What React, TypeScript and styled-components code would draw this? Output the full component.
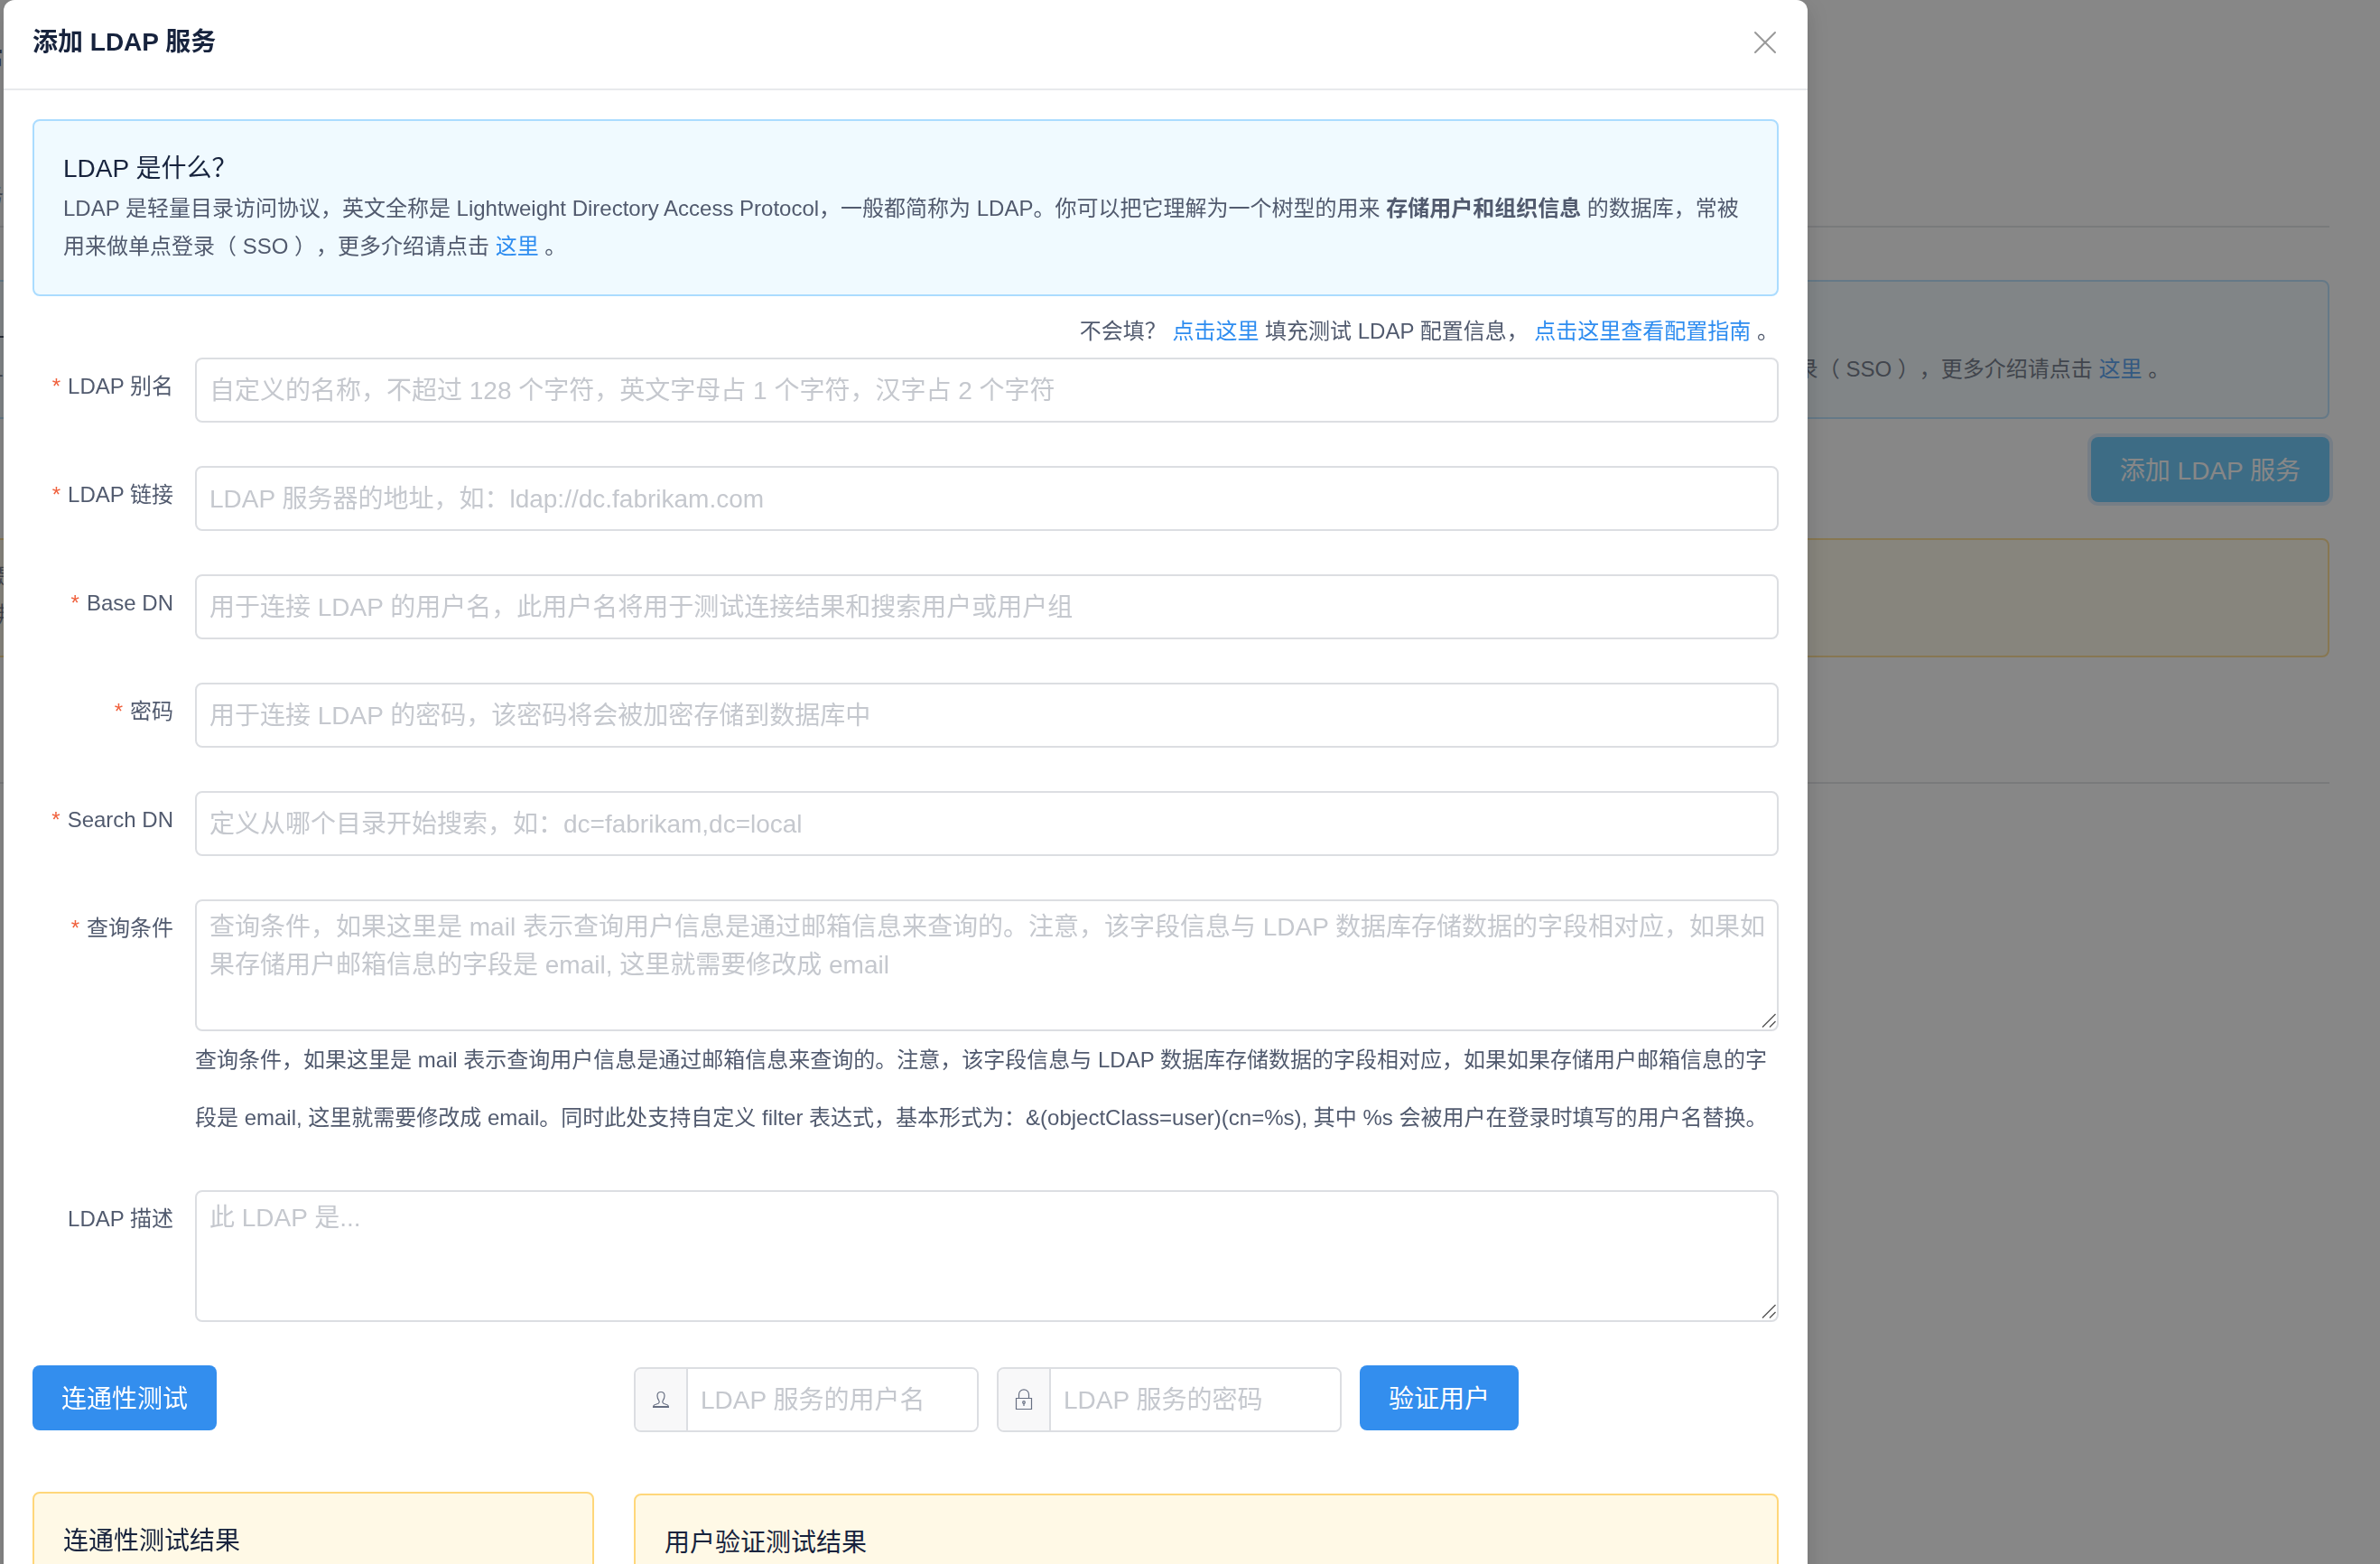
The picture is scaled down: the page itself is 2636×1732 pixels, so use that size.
import React from 'react';
import styled, { createGlobalStyle } from 'styled-components';

const GlobalStyle = createGlobalStyle`
  *, *::before, *::after { box-sizing: border-box; }
  html, body { margin: 0; overflow: hidden; }
  body, button, input, textarea {
    font-family: "Liberation Sans", "Noto Sans CJK SC", sans-serif;
  }
  body {
    background: #fff;
    color: #515a6e;
    font-size: 24px;
    line-height: 42px;
    text-spacing-trim: space-all;
  }
  h1, h2, h3, p { margin: 0; font-weight: 400; }
`;

const Link = styled.a`
  color: #2d8cf0;
  text-decoration: none;
`;

const tones = {
  info: { background: '#f0faff', border: '#abdcff' },
  warning: { background: '#fff9e6', border: '#ffd77a' },
};

const Alert = styled.section<{ $tone: keyof typeof tones; $compact?: boolean }>`
  padding: ${(p) => (p.$compact ? '20px 32px 24px' : '32px')};
  border: 2px solid ${(p) => tones[p.$tone].border};
  border-radius: 8px;
  background: ${(p) => tones[p.$tone].background};
`;

const AlertTitle = styled.h3`
  margin-bottom: 2px;
  color: #17233d;
  font-size: 28px;
  line-height: 42px;
`;

const Button = styled.button<{ $focused?: boolean }>`
  height: 72px;
  padding: 0 32px 2px;
  border: 0;
  border-radius: 8px;
  background: ${(p) => (p.$focused ? '#48bbfa' : '#338eee')};
  box-shadow: ${(p) => (p.$focused ? '0 0 0 4px rgba(45, 140, 240, 0.2)' : 'none')};
  color: #fff;
  font-size: 28px;
  white-space: nowrap;
`;

/* Settings page behind the dialog */

const Page = styled.main`
  margin: 0 56px 0 -44px;
`;

const PageHeader = styled.header`
  padding: 40px 0 12px;
  border-bottom: 2px solid #dcdee2;
`;

const PageTitle = styled.h1`
  color: #17233d;
  font-size: 48px;
  font-weight: 700;
  line-height: 72px;
  margin-bottom: 84px;
`;

const PageBody = styled.div`
  padding: 58px 0 138px;
  border-bottom: 2px solid #dcdee2;
`;

const PageActions = styled.div`
  display: flex;
  justify-content: flex-end;
  padding: 20px 0 40px;
`;

/* Dialog */

const Mask = styled.div`
  position: fixed;
  inset: 0;
  overflow: hidden;
  padding: 0 634px 0 4px;
  background: rgba(55, 55, 55, 0.6);
`;

const Dialog = styled.div`
  border-radius: 12px;
  background: #fff;
  box-shadow: 0 8px 24px rgba(0, 0, 0, 0.15);
`;

const DialogHeader = styled.header`
  display: flex;
  align-items: center;
  justify-content: space-between;
  height: 100px;
  padding: 0 32px 4px;
  border-bottom: 2px solid #e8eaec;
`;

const DialogTitle = styled.h2`
  color: #17233d;
  font-size: 28px;
  font-weight: 700;
  line-height: 40px;
`;

const CloseButton = styled.button`
  display: flex;
  padding: 0;
  border: 0;
  background: none;
  color: #999;
`;

const DialogBody = styled.form`
  padding: 32px;
`;

const HelpLine = styled.p`
  margin: 18px 0 8px;
  text-align: right;
`;

const FormItem = styled.div`
  display: grid;
  grid-template-columns: 156px 1fr;
  column-gap: 24px;
  margin-bottom: 48px;
`;

const Label = styled.label<{ $required?: boolean }>`
  padding-top: 20px;
  line-height: 24px;
  text-align: right;

  &::before {
    content: ${(p) => (p.$required ? '"*"' : 'none')};
    margin-right: 8px;
    color: #f0603c;
  }
`;

const Input = styled.input`
  width: 100%;
  height: 72px;
  padding: 2px 14px 0;
  border: 2px solid #dcdee2;
  border-radius: 8px;
  background: #fff;
  color: #515a6e;
  font-size: 28px;
  outline: none;

  &::placeholder { color: #c5c8ce; }
`;

const AreaBox = styled.div`
  position: relative;
`;

const Area = styled.textarea`
  display: block;
  width: 100%;
  padding: 8px 10px 8px 14px;
  border: 2px solid #dcdee2;
  border-radius: 8px;
  color: #515a6e;
  font-size: 28px;
  line-height: 42px;
  resize: none;
  outline: none;

  &::placeholder { color: #c5c8ce; }
`;

const Grip = styled.svg`
  position: absolute;
  right: 3px;
  bottom: 4px;
  pointer-events: none;
`;

const Hint = styled.p`
  line-height: 64px;
`;

const Tests = styled.div`
  display: grid;
  grid-template-columns: 622fr 1268fr;
  column-gap: 44px;
  align-items: start;
`;

const TestColumn = styled.div`
  display: grid;
  row-gap: 68px;
`;

const TestRow = styled.div`
  display: flex;
  align-items: flex-start;
  gap: 20px;
`;

const InputGroup = styled.div`
  display: flex;
  width: 382px;
  height: 72px;
  margin-top: 2px;
  overflow: hidden;
  border: 2px solid #dcdee2;
  border-radius: 8px;
`;

const Prepend = styled.label`
  display: flex;
  flex: 0 0 58px;
  align-items: center;
  justify-content: center;
  border-right: 2px solid #dcdee2;
  background: #f8f8f9;
`;

const GroupInput = styled(Input)`
  flex: 1;
  min-width: 0;
  height: 68px;
  border: 0;
  border-radius: 0;
`;

const ResultAlert = styled(Alert)`
  min-height: 160px;
`;

const CloseIcon = () => (
  <svg width="30" height="30" viewBox="0 0 30 30" fill="none" stroke="currentColor" strokeWidth="2" strokeLinecap="round">
    <path d="M4 4 26 26M26 4 4 26" />
  </svg>
);

const PersonIcon = () => (
  <svg width="28" height="28" viewBox="0 0 28 28" fill="none" stroke="#676f82" strokeWidth="1.2" strokeLinejoin="round">
    <path d="M14 5.5c-2.6 0-4 1.8-4 4.3 0 2.2.8 3.8 1.8 5.2.5.8.4 2.2-.2 2.9-.8.9-4.2 1.3-5.2 2.3-.7.7-.9 1.5-.9 2.3h17c0-.8-.2-1.6-.9-2.3-1-1-4.4-1.4-5.2-2.3-.6-.7-.7-2.1-.2-2.9 1-1.4 1.8-3 1.8-5.2 0-2.5-1.4-4.3-4-4.3z" />
    <path d="M5.8 21.5h16.4" />
  </svg>
);

const LockIcon = () => (
  <svg width="28" height="28" viewBox="0 0 28 28" fill="none" stroke="#676f82" strokeWidth="1.2">
    <path d="M5.5 12.5h17v12h-17zM8.5 12.5V8.3a5.5 5.5 0 0 1 11 0v4.2" />
    <circle cx="14" cy="17" r="1.3" />
    <path d="M14 18.3v2.7" />
  </svg>
);

const fields = [
  { id: 'alias', label: 'LDAP 别名', placeholder: '自定义的名称，不超过 128 个字符，英文字母占 1 个字符，汉字占 2 个字符' },
  { id: 'url', label: 'LDAP 链接', placeholder: 'LDAP 服务器的地址，如：ldap://dc.fabrikam.com' },
  { id: 'base-dn', label: 'Base DN', placeholder: '用于连接 LDAP 的用户名，此用户名将用于测试连接结果和搜索用户或用户组' },
  { id: 'password', label: '密码', type: 'password', placeholder: '用于连接 LDAP 的密码，该密码将会被加密存储到数据库中' },
  { id: 'search-dn', label: 'Search DN', placeholder: '定义从哪个目录开始搜索，如：dc=fabrikam,dc=local' },
];

const LdapIntro = () => (
  <Alert $tone="info">
    <AlertTitle>LDAP 是什么？</AlertTitle>
    <p>
      LDAP 是轻量目录访问协议，英文全称是 Lightweight Directory Access Protocol，一般都简称为
      LDAP。你可以把它理解为一个树型的用来 <strong>存储用户和组织信息</strong> 的数据库，常被用来做单点登录（
      SSO ），更多介绍请点击 <Link href="#ldap">这里</Link> 。
    </p>
  </Alert>
);

const TextArea = ({ id, placeholder }: { id: string; placeholder: string }) => (
  <AreaBox>
    <Area id={id} rows={3} placeholder={placeholder} />
    <Grip width="16" height="16" viewBox="0 0 16 16" stroke="#555" strokeWidth="1.4">
      <path d="M1 15.5 15.5 1M9 15.5 15.5 9" />
    </Grip>
  </AreaBox>
);

export default function App() {
  return (
    <>
      <GlobalStyle />
      <Page>
        <PageHeader>
          <PageTitle>管理</PageTitle>
          <p>服务</p>
        </PageHeader>
        <PageBody>
          <LdapIntro />
          <PageActions>
            <Button type="button" $focused>添加 LDAP 服务</Button>
          </PageActions>
          <Alert $tone="warning" $compact>
            <p>提示</p>
            <p>绑定</p>
          </Alert>
        </PageBody>
      </Page>

      <Mask>
        <Dialog role="dialog" aria-labelledby="dialog-title">
          <DialogHeader>
            <DialogTitle id="dialog-title">添加 LDAP 服务</DialogTitle>
            <CloseButton type="button" aria-label="关闭"><CloseIcon /></CloseButton>
          </DialogHeader>
          <DialogBody>
            <LdapIntro />
            <HelpLine>
              不会填？ <Link href="#fill">点击这里</Link> 填充测试 LDAP 配置信息，{' '}
              <Link href="#guide">点击这里查看配置指南</Link> 。
            </HelpLine>

            {fields.map((f) => (
              <FormItem key={f.id}>
                <Label htmlFor={f.id} $required>{f.label}</Label>
                <Input id={f.id} type={f.type ?? 'text'} placeholder={f.placeholder} />
              </FormItem>
            ))}

            <FormItem>
              <Label htmlFor="filter" $required>查询条件</Label>
              <div>
                <TextArea
                  id="filter"
                  placeholder="查询条件，如果这里是 mail 表示查询用户信息是通过邮箱信息来查询的。注意，该字段信息与 LDAP 数据库存储数据的字段相对应，如果如果存储用户邮箱信息的字段是 email, 这里就需要修改成 email"
                />
                <Hint>
                  查询条件，如果这里是 mail 表示查询用户信息是通过邮箱信息来查询的。注意，该字段信息与 LDAP
                  数据库存储数据的字段相对应，如果如果存储用户邮箱信息的字段是 email, 这里就需要修改成
                  email。同时此处支持自定义 filter 表达式，基本形式为：&amp;(objectClass=user)(cn=%s), 其中 %s
                  会被用户在登录时填写的用户名替换。
                </Hint>
              </div>
            </FormItem>

            <FormItem>
              <Label htmlFor="description">LDAP 描述</Label>
              <TextArea id="description" placeholder="此 LDAP 是..." />
            </FormItem>

            <Tests>
              <TestColumn>
                <TestRow>
                  <Button type="button">连通性测试</Button>
                </TestRow>
                <ResultAlert $tone="warning">
                  <AlertTitle>连通性测试结果</AlertTitle>
                </ResultAlert>
              </TestColumn>
              <TestColumn>
                <TestRow>
                  <InputGroup>
                    <Prepend htmlFor="test-user" aria-label="用户名"><PersonIcon /></Prepend>
                    <GroupInput id="test-user" placeholder="LDAP 服务的用户名" />
                  </InputGroup>
                  <InputGroup>
                    <Prepend htmlFor="test-password" aria-label="密码"><LockIcon /></Prepend>
                    <GroupInput id="test-password" type="password" placeholder="LDAP 服务的密码" />
                  </InputGroup>
                  <Button type="button">验证用户</Button>
                </TestRow>
                <ResultAlert $tone="warning">
                  <AlertTitle>用户验证测试结果</AlertTitle>
                </ResultAlert>
              </TestColumn>
            </Tests>
          </DialogBody>
        </Dialog>
      </Mask>
    </>
  );
}
